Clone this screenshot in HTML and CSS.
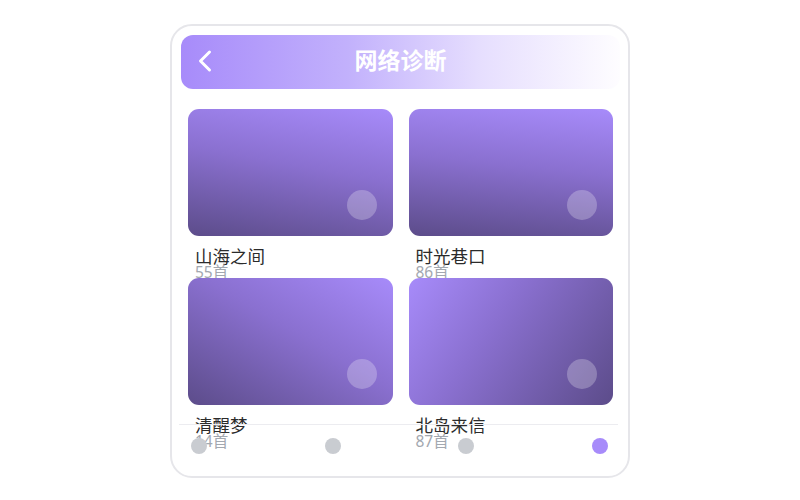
FILE: index.html
```
<!DOCTYPE html>
<html lang="zh-CN">
<head>
<meta charset="utf-8">
<title>网络诊断</title>
<link rel="stylesheet" href="styles.css">
</head>
<body>
<div class="phone">
  <header class="topbar">
    <svg class="back" width="16" height="24" viewBox="0 0 16 24"><path d="M12.5 3 L3.5 12 L12.5 21" fill="none" stroke="#fff" stroke-width="3" stroke-linecap="round" stroke-linejoin="round"/></svg>
    <h1 class="title">网络诊断</h1>
  </header>
  <main class="grid">
    <div class="item">
      <div class="cover cover-a"><span class="play"></span></div>
      <div class="name">山海之间</div>
      <div class="count">55首</div>
    </div>
    <div class="item">
      <div class="cover cover-b"><span class="play"></span></div>
      <div class="name">时光巷口</div>
      <div class="count">86首</div>
    </div>
    <div class="item">
      <div class="cover cover-c"><span class="play"></span></div>
      <div class="name">清醒梦</div>
      <div class="count">14首</div>
    </div>
    <div class="item">
      <div class="cover cover-d"><span class="play"></span></div>
      <div class="name">北岛来信</div>
      <div class="count">87首</div>
    </div>
  </main>
  <nav class="tabbar">
    <span class="dot"></span>
    <span class="dot"></span>
    <span class="dot"></span>
    <span class="dot active"></span>
  </nav>
</div>
</body>
</html>
```
FILE: styles.css
```
* { box-sizing: border-box; }
html, body { margin: 0; padding: 0; background: #fff; }
body { font-family: "Noto Sans", "Noto Sans CJK SC", sans-serif; }

.phone {
  position: relative;
  width: 460px;
  height: 454px;
  margin: 24px auto 0;
  border: 2px solid #e6e6ea;
  border-radius: 22px;
  background: #fff;
  padding: 9px 8px 0 9px;
  overflow: hidden;
}

.topbar {
  position: relative;
  height: 54px;
  border-radius: 12px;
  background: linear-gradient(90deg, #a78bfa 0%, #c2b1fc 38%, #e6defe 68%, #fefdff 100%);
  display: flex;
  align-items: center;
  justify-content: center;
}
.back { position: absolute; left: 16px; top: 14px; }
.title {
  margin: 0 0 5px 0;
  font-family: "Noto Sans CJK SC", sans-serif;
  font-size: 23px;
  font-weight: 700;
  color: #fff;
  line-height: 1;
}

.grid {
  margin-top: 20px;
  padding: 0 7px 0 7px;
  display: grid;
  grid-template-columns: 1fr 1fr;
  column-gap: 16px;
  row-gap: 0;
}
.item { height: 169px; }
.cover {
  position: relative;
  height: 127px;
  border-radius: 11px;
}
.cover-a { background: linear-gradient(190deg, #a78bfa 0%, #8a70d0 45%, #5c4c8a 100%); }
.cover-b { background: linear-gradient(186deg, #a78bfa 0%, #8a70d0 45%, #5c4c8a 100%); }
.cover-c { background: linear-gradient(210deg, #a78bfa 0%, #8a70d0 45%, #5c4c8a 100%); }
.cover-d { background: linear-gradient(125deg, #a78bfa 0%, #8a70d0 40%, #5c4c8a 100%); }
.play {
  position: absolute;
  right: 16px;
  bottom: 16px;
  width: 30px;
  height: 30px;
  border-radius: 50%;
  background: rgba(255, 255, 255, 0.25);
}
.name {
  margin-top: 12px;
  padding-left: 7px;
  font-size: 17.5px;
  line-height: 17px;
  color: #2b2b2b;
}
.count {
  margin-top: -1px;
  padding-left: 7px;
  font-size: 15.5px;
  line-height: 16px;
  color: #a3a8b0;
}

.tabbar {
  position: absolute;
  left: 7px;
  right: 10px;
  top: 398px;
  height: 48px;
  border-top: 1px solid #ececf0;
  padding: 13px 10px 0 12px;
  display: flex;
  justify-content: space-between;
}
.dot {
  width: 16px;
  height: 16px;
  border-radius: 50%;
  background: #c9ccd1;
}
.dot.active { background: #a78bfa; }
```
